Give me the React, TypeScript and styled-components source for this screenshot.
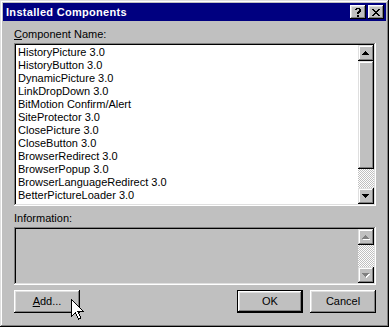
import React from 'react';
import styled, { createGlobalStyle, css } from 'styled-components';

const Global = createGlobalStyle`
  html, body { margin: 0; padding: 0; background: #c0c0c0; }
  body { font-family: "Liberation Sans", Arial, sans-serif; font-size: 11px; color: #000; }
  * { box-sizing: border-box; }
`;

const raisedWindow = css`
  box-shadow: inset -1px -1px #000, inset 1px 1px #dfdfdf, inset -2px -2px #808080, inset 2px 2px #fff;
`;
const raisedButton = css`
  box-shadow: inset -1px -1px #000, inset 1px 1px #fff, inset -2px -2px #808080, inset 2px 2px #dfdfdf;
`;
const raisedScroll = css`
  box-shadow: inset -1px -1px #000, inset 1px 1px #dfdfdf, inset -2px -2px #808080, inset 2px 2px #fff;
`;
const sunken = css`
  box-shadow: inset -1px -1px #fff, inset 1px 1px #808080, inset -2px -2px #dfdfdf, inset 2px 2px #000;
`;

const Window = styled.div`
  position: relative;
  width: 389px;
  height: 327px;
  background: #c0c0c0;
  padding: 3px;
  display: flex;
  flex-direction: column;
  ${raisedWindow}
`;

const TitleBar = styled.div`
  height: 18px;
  background: #000080;
  display: flex;
  align-items: center;
  justify-content: space-between;
  padding: 0 2px 0 3px;
`;

const Title = styled.span`
  color: #fff;
  font-weight: bold;
  font-size: 11px;
  line-height: 13px;
  letter-spacing: 0.3px;
`;

const TitleButtons = styled.div`
  display: flex;
  gap: 2px;
`;

const TitleButton = styled.div`
  width: 16px;
  height: 14px;
  background: #c0c0c0;
  ${raisedButton}
  display: flex;
  align-items: center;
  justify-content: center;
`;

const Body = styled.div`
  display: flex;
  flex-direction: column;
  padding: 7px 10px 0 11px;
`;

const Label = styled.div<{ $mb: number }>`
  line-height: 13px;
  height: 13px;
  margin-bottom: ${p => p.$mb}px;
`;

const Field = styled.div<{ $h: number; $bg: string }>`
  width: 362px;
  height: ${p => p.$h}px;
  background: ${p => p.$bg};
  padding: 2px;
  display: flex;
  ${sunken}
`;

const List = styled.div`
  flex: 1;
  overflow: hidden;
  padding: 1px 0 0 2px;
`;

const Item = styled.div`
  line-height: 13px;
  height: 13px;
  white-space: nowrap;
`;

const ScrollBar = styled.div`
  width: 16px;
  display: flex;
  flex-direction: column;
`;

const ScrollBtn = styled.div`
  width: 16px;
  height: 16px;
  flex: none;
  background: #c0c0c0;
  ${raisedScroll}
  display: flex;
  align-items: center;
  justify-content: center;
`;

const Thumb = styled.div<{ $h: number }>`
  width: 16px;
  height: ${p => p.$h}px;
  flex: none;
  background: #c0c0c0;
  ${raisedScroll}
`;

const Track = styled.div`
  flex: 1;
  background-color: #fff;
  background-image: conic-gradient(#c0c0c0 25%, #fff 0 50%, #c0c0c0 0 75%, #fff 0);
  background-size: 2px 2px;
`;

const Spacer = styled.div<{ $h: number }>`
  height: ${p => p.$h}px;
  flex: none;
`;

const ButtonRow = styled.div`
  display: flex;
  margin-top: 5px;
  width: 362px;
`;

const Button = styled.div<{ $default?: boolean }>`
  width: 66px;
  height: 23px;
  background: #c0c0c0;
  display: flex;
  align-items: center;
  justify-content: center;
  line-height: 13px;
  ${p =>
    p.$default
      ? css`
          box-shadow: inset -1px -1px #000, inset 1px 1px #000, inset -2px -2px #000, inset 2px 2px #fff,
            inset -3px -3px #808080, inset 3px 3px #dfdfdf;
        `
      : raisedButton}
`;

const Grow = styled.div`
  flex: 1;
`;

const Gap = styled.div`
  width: 7px;
`;

const U = styled.span`
  text-decoration: underline;
`;

const Cursor = styled.svg`
  position: absolute;
  left: 71px;
  top: 299px;
`;

const Arrow = ({ up, disabled }: { up?: boolean; disabled?: boolean }) => (
  <svg width="8" height="5" viewBox="0 0 8 5" style={{ display: 'block' }}>
    {disabled && (
      <path
        d={up ? 'M4 1h1v1h1v1h1v1h1v1H1V4h1V3h1V2h1z' : 'M1 1h7v1H7v1H6v1H5v1H4V4H3V3H2V2H1z'}
        fill="#fff"
      />
    )}
    <path
      d={up ? 'M3 0h1v1h1v1h1v1h1v1H0V3h1V2h1V1h1z' : 'M0 0h7v1H6v1H5v1H4v1H3V3H2V2H1V1H0z'}
      fill={disabled ? '#808080' : '#000'}
    />
  </svg>
);

const items = [
  'HistoryPicture 3.0',
  'HistoryButton 3.0',
  'DynamicPicture 3.0',
  'LinkDropDown 3.0',
  'BitMotion Confirm/Alert',
  'SiteProtector 3.0',
  'ClosePicture 3.0',
  'CloseButton 3.0',
  'BrowserRedirect 3.0',
  'BrowserPopup 3.0',
  'BrowserLanguageRedirect 3.0',
  'BetterPictureLoader 3.0',
  'ImageHTTP 3.0',
];

export default function App() {
  return (
    <>
      <Global />
      <Window>
        <TitleBar>
          <Title>Installed Components</Title>
          <TitleButtons>
            <TitleButton>
              <svg width="6" height="9" viewBox="0 0 6 9">
                <path d="M1 0h4v1h1v3H5v1H4v1H2V4h1V3h1V1H2v1H0V1h1z M2 7h2v2H2z" fill="#000" />
              </svg>
            </TitleButton>
            <TitleButton>
              <svg width="8" height="7" viewBox="0 0 8 7">
                <path d="M0 0h2v1h1v1h2V1h1V0h2v1H7v1H6v1H5v1h1v1h1v1h1v1H6V6H5V5H3v1H2v1H0V6h1V5h1V4h1V3H2V2H1V1H0z" fill="#000" />
              </svg>
            </TitleButton>
          </TitleButtons>
        </TitleBar>
        <Body>
          <Label $mb={2}>
            <U>C</U>omponent Name:
          </Label>
          <Field $h={163} $bg="#fff">
            <List>
              {items.map(t => (
                <Item key={t}>{t}</Item>
              ))}
            </List>
            <ScrollBar>
              <ScrollBtn>
                <Arrow up />
              </ScrollBtn>
              <Thumb $h={108} />
              <Track />
              <ScrollBtn>
                <Arrow />
              </ScrollBtn>
            </ScrollBar>
          </Field>
          <Spacer $h={6} />
          <Label $mb={2}>Information:</Label>
          <Field $h={58} $bg="#c0c0c0">
            <Grow />
            <ScrollBar>
              <ScrollBtn>
                <Arrow up disabled />
              </ScrollBtn>
              <Track />
              <ScrollBtn>
                <Arrow disabled />
              </ScrollBtn>
            </ScrollBar>
          </Field>
          <ButtonRow>
            <Button>
              <span>
                <U>A</U>dd...
              </span>
            </Button>
            <Grow />
            <Button $default>OK</Button>
            <Gap />
            <Button>Cancel</Button>
          </ButtonRow>
        </Body>
        <Cursor width="13" height="21" viewBox="0 0 13 21">
          <path d="M0.5 0.5V17.5L4.5 13.5L7.5 20L10 19L7 12.5H12.5Z" fill="#fff" stroke="#000" strokeWidth="1" shapeRendering="crispEdges" />
        </Cursor>
      </Window>
    </>
  );
}
